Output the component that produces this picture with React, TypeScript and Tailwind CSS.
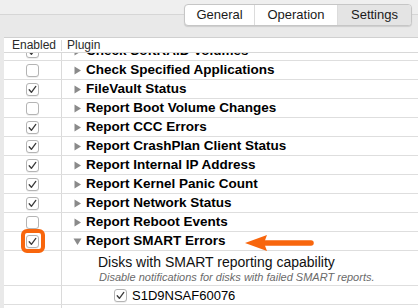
import React from "react";

const font = { fontFamily: '"Liberation Sans", Arial, Helvetica, sans-serif' };

function Check({ checked }: { checked: boolean }) {
  return (
    <div className="w-[13px] h-[13px] rounded-[3px] border border-[#b4b4b4] bg-white flex items-center justify-center shadow-[0_1px_0_rgba(0,0,0,0.06)]">
      {checked && (
        <svg width="11" height="11" viewBox="0 0 11 11">
          <path d="M2.2 5.8 L4.4 8.3 L8.8 2.4" fill="none" stroke="#3a3a3a" strokeWidth="1.3" strokeLinecap="round" strokeLinejoin="round" />
        </svg>
      )}
    </div>
  );
}

function Tri({ open }: { open?: boolean }) {
  return open ? (
    <svg width="9" height="9" viewBox="0 0 9 9" className="shrink-0">
      <path d="M0.5 1.5 L8.5 1.5 L4.5 8 Z" fill="#8a8a8a" />
    </svg>
  ) : (
    <svg width="9" height="9" viewBox="0 0 9 9" className="shrink-0">
      <path d="M1.5 0.5 L8 4.5 L1.5 8.5 Z" fill="#8a8a8a" />
    </svg>
  );
}

const rows: { name: string; checked: boolean; open?: boolean; hl?: boolean }[] = [
  { name: "Check SoftRAID Volumes", checked: true },
  { name: "Check Specified Applications", checked: false },
  { name: "FileVault Status", checked: true },
  { name: "Report Boot Volume Changes", checked: false },
  { name: "Report CCC Errors", checked: true },
  { name: "Report CrashPlan Client Status", checked: true },
  { name: "Report Internal IP Address", checked: true },
  { name: "Report Kernel Panic Count", checked: true },
  { name: "Report Network Status", checked: true },
  { name: "Report Reboot Events", checked: false },
  { name: "Report SMART Errors", checked: true, open: true, hl: true },
];

export default function App() {
  return (
    <div className="w-[418px] h-[308px] overflow-hidden bg-[#e9e9e9] flex flex-col" style={font}>
      {/* toolbar */}
      <div className="relative h-[37px] shrink-0">
        <div className="h-[15px] bg-[#efefef] border-b border-[#d6d6d6]" />
        <div className="absolute left-[184px] top-[4px] h-[22px] w-[228px] flex rounded-[4px] border border-[#c6c6c6] bg-white shadow-[0_1px_1px_rgba(0,0,0,0.12)] overflow-hidden text-[13px] text-[#1a1a1a]">
          <div className="w-[70px] flex items-center justify-center border-r border-[#dcdcdc]">General</div>
          <div className="w-[83px] flex items-center justify-center border-r border-[#dcdcdc]">Operation</div>
          <div className="flex-1 flex items-center justify-center bg-[#e4e4e4]">Settings</div>
        </div>
      </div>
      {/* table */}
      <div className="ml-[4px] flex-1 bg-white border-t border-[#d0d0d0] flex flex-col overflow-hidden">
        <div className="h-[15px] shrink-0 flex items-center border-b border-[#d8d8d8] text-[12px] text-[#2a2a2a] relative z-10 bg-white">
          <div className="w-[58px] pl-[8px] h-[11px] flex items-center border-r border-[#dadada] leading-none">Enabled</div>
          <div className="pl-[5px] leading-none">Plugin</div>
        </div>
        <div className="flex-1 overflow-hidden relative">
          <div className="-mt-[11px]">
            {rows.map((r) => (
              <div key={r.name} className="h-[19px] flex border-b border-[#dedede]">
                <div className="w-[58px] shrink-0 border-r border-[#dadada] flex items-center justify-center relative">
                  {r.hl && (
                    <div className="absolute left-[17px] top-[-3px] w-[24px] h-[24px] rounded-[6px] border-[4px] border-[#f8660d]" />
                  )}
                  <Check checked={r.checked} />
                </div>
                <div className="flex items-center pl-[11px] gap-[4px]">
                  <Tri open={r.open} />
                  <span className="font-bold text-[13.5px] text-black whitespace-nowrap leading-none">{r.name}</span>
                </div>
              </div>
            ))}
            <div className="h-[35px] flex border-b border-[#dedede]">
              <div className="w-[58px] shrink-0 border-r border-[#dadada]" />
              <div className="pl-[36px] pt-[3px] flex flex-col">
                <span className="text-[14px] text-[#111] leading-[16px] whitespace-nowrap">Disks with SMART reporting capability</span>
                <span className="text-[11px] italic text-[#6a6a6a] leading-[14px] whitespace-nowrap pl-[1px]">Disable notifications for disks with failed SMART reports.</span>
              </div>
            </div>
            <div className="h-[19px] flex border-b border-[#dedede]">
              <div className="w-[58px] shrink-0 border-r border-[#dadada]" />
              <div className="pl-[52px] flex items-center gap-[5px]">
                <Check checked />
                <span className="text-[13px] text-black leading-none">S1D9NSAF60076</span>
              </div>
            </div>
            <div className="h-[19px] flex">
              <div className="w-[58px] shrink-0 border-r border-[#dadada]" />
            </div>
          </div>
          <svg className="absolute left-[237px] top-[181px]" width="76" height="18" viewBox="0 0 76 18">
            <path d="M4 9 L26 1 L23 9 L26 17 Z" fill="#f8660d" />
            <path d="M22 9 L70 9" stroke="#f8660d" strokeWidth="5.5" strokeLinecap="round" />
          </svg>
        </div>
      </div>
    </div>
  );
}
